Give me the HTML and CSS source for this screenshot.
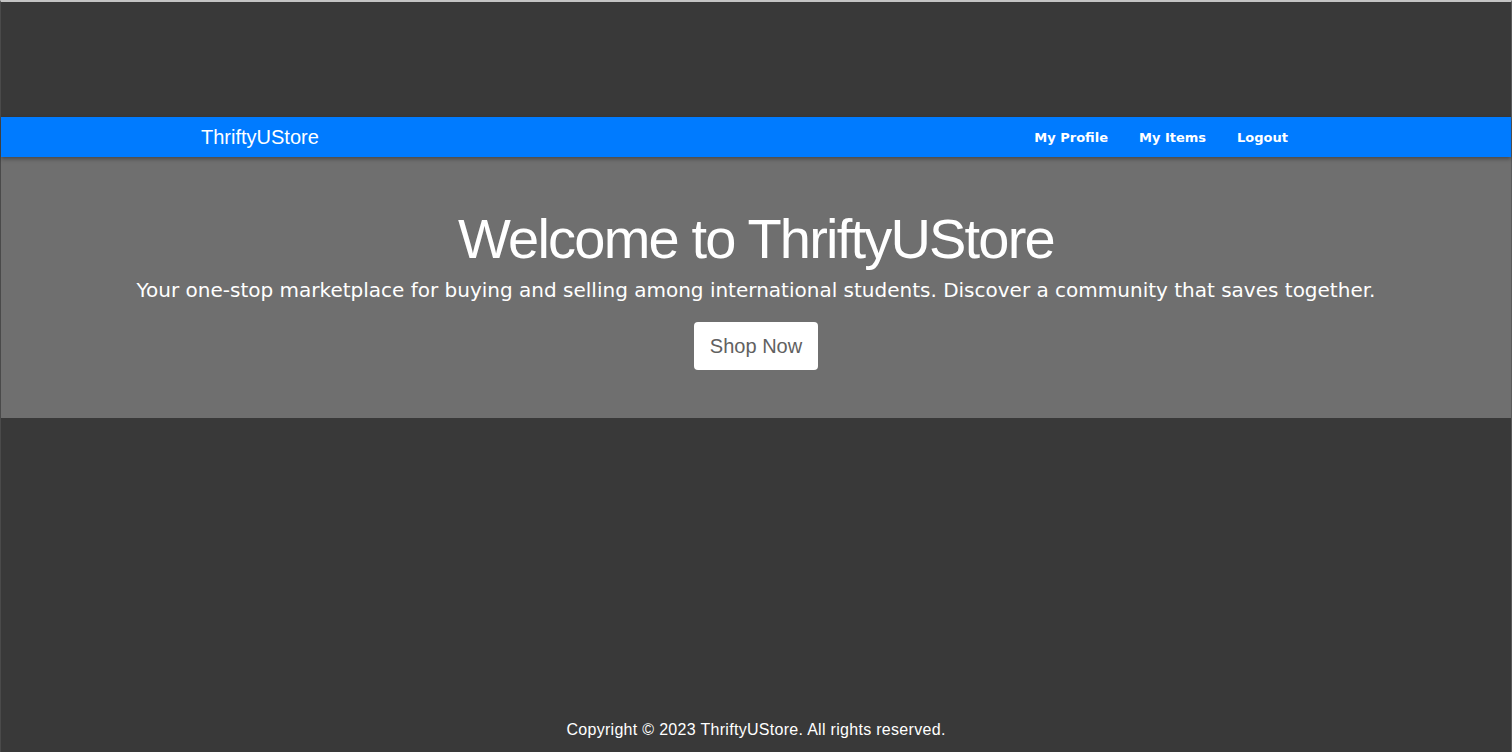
FILE: index.html
```html
<!DOCTYPE html>
<html lang="en">
<head>
<meta charset="utf-8">
<title>ThriftyUStore</title>
<link rel="stylesheet" href="styles.css">
</head>
<body>
<div class="page">
  <div class="top-space"></div>
  <nav class="navbar">
    <div class="container nav-inner">
      <a class="brand" href="#">ThriftyUStore</a>
      <ul class="nav-links">
        <li><a href="#">My Profile</a></li>
        <li><a href="#">My Items</a></li>
        <li><a href="#">Logout</a></li>
      </ul>
    </div>
  </nav>
  <section class="hero">
    <h1 class="hero-title">Welcome to ThriftyUStore</h1>
    <p class="hero-lead">Your one-stop marketplace for buying and selling among international students. Discover a community that saves together.</p>
    <a class="btn-shop" href="#">Shop Now</a>
  </section>
  <main class="content"></main>
  <footer class="footer">Copyright © 2023 ThriftyUStore. All rights reserved.</footer>
</div>
</body>
</html>
```
FILE: styles.css
```css
* { box-sizing: border-box; }
html, body { margin: 0; padding: 0; height: 100%; }
body {
  background: #393939;
  font-family: "Liberation Sans", Arial, sans-serif;
  color: #fff;
}
.page {
  height: 752px;
  display: flex;
  flex-direction: column;
  border-top: 2px solid #c4c4c4;
  border-left: 1px solid #4a4a4a;
  border-right: 1px solid #5a5a5a;
}
.top-space { height: 115px; flex: none; }
.navbar {
  background: #007bff;
  height: 40px;
  flex: none;
  position: relative;
  z-index: 1;
  box-shadow: 0 2px 4px rgba(0,0,0,0.35);
}
.container {
  width: 1140px;
  margin: 0 auto;
  padding: 0 15px;
}
.nav-inner {
  height: 100%;
  display: flex;
  align-items: center;
  justify-content: space-between;
}
.brand {
  color: #fff;
  text-decoration: none;
  font-size: 20px;
}
.nav-links {
  list-style: none;
  margin: 0;
  padding: 0;
  display: flex;
  gap: 31px;
  margin-right: 23px;
}
.nav-links a {
  color: #fff;
  text-decoration: none;
  font-family: "DejaVu Sans", Verdana, sans-serif;
  font-weight: bold;
  font-size: 13px;
}
.hero {
  background: #6f6f6f;
  height: 261px;
  flex: none;
  display: flex;
  flex-direction: column;
  align-items: center;
  padding-top: 48px;
}
.hero-title {
  margin: 0 0 3px;
  font-size: 56px;
  font-weight: 300;
  line-height: 67px;
  letter-spacing: -1.8px;
}
.hero-lead {
  margin: 0;
  font-family: "DejaVu Sans", Verdana, sans-serif;
  font-size: 20px;
  line-height: 30px;
}
.btn-shop {
  margin-top: 17px;
  background: #fff;
  color: #616161;
  text-decoration: none;
  font-size: 20px;
  line-height: 30px;
  padding: 9px 16px;
  border-radius: 4px;
  white-space: nowrap;
}
.content { flex: 1; }
.footer {
  text-align: center;
  font-size: 16px;
  letter-spacing: 0.3px;
  padding-bottom: 12px;
  line-height: 20px;
}
```
